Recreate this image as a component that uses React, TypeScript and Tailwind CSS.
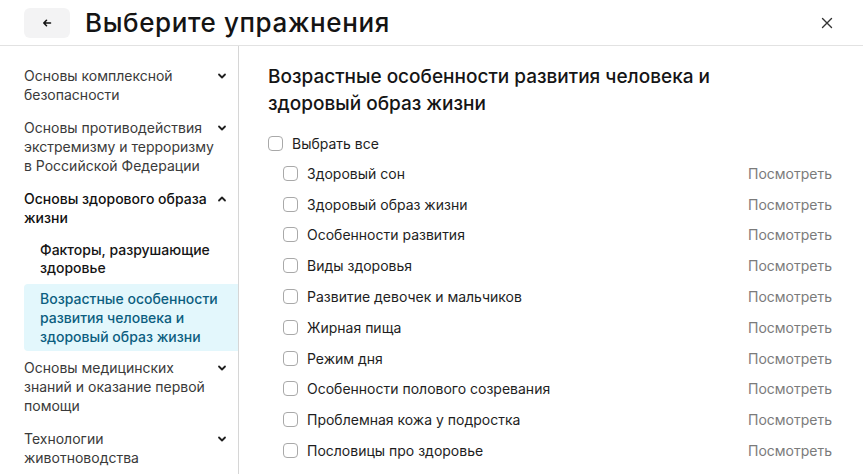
import React from "react";

type SubItem = { lines: string[]; active?: boolean };
type Section = { lines: string[]; open?: boolean; children?: SubItem[] };

// titles are split the way the sidebar wraps them
const SECTIONS: Section[] = [
  { lines: ["Основы комплексной", "безопасности"] },
  { lines: ["Основы противодействия", "экстремизму и терроризму", "в Российской Федерации"] },
  {
    lines: ["Основы здорового образа", "жизни"],
    open: true,
    children: [
      { lines: ["Факторы, разрушающие", "здоровье"] },
      { lines: ["Возрастные особенности", "развития человека и", "здоровый образ жизни"], active: true },
    ],
  },
  { lines: ["Основы медицинских", "знаний и оказание первой", "помощи"] },
  { lines: ["Технологии", "животноводства"] },
];

const EXERCISES = [
  "Здоровый сон",
  "Здоровый образ жизни",
  "Особенности развития",
  "Виды здоровья",
  "Развитие девочек и мальчиков",
  "Жирная пища",
  "Режим дня",
  "Особенности полового созревания",
  "Проблемная кожа у подростка",
  "Пословицы про здоровье",
];

function Lines({ lines }: { lines: string[] }) {
  return (
    <span className="whitespace-nowrap">
      {lines.map((l, i) => (
        <span key={i} className="block">
          {l}
        </span>
      ))}
    </span>
  );
}

function Chevron({ up }: { up?: boolean }) {
  return (
    <svg width="10" height="10" viewBox="0 0 10 10" className="mt-[5px] shrink-0">
      <path
        d={up ? "M2 6.5 L5 3.5 L8 6.5" : "M2 3.5 L5 6.5 L8 3.5"}
        fill="none"
        stroke="#1f1f1f"
        strokeWidth="1.8"
        strokeLinecap="round"
        strokeLinejoin="round"
      />
    </svg>
  );
}

function Checkbox() {
  return <span className="block h-[15px] w-[15px] shrink-0 rounded-[4px] border border-[#a9a9a9] bg-white" />;
}

export default function App() {
  return (
    <div
      className="flex h-[474px] w-[863px] flex-col overflow-hidden bg-white text-[#1e1e1e]"
      style={{ fontFamily: "Inter, 'Noto Sans', sans-serif" }}
    >
      {/* header */}
      <div className="flex h-[46px] shrink-0 items-center border-b border-[#e2e2e2] pl-6 pr-[26px]">
        <button className="flex h-[30px] w-[46px] items-center justify-center rounded-md bg-[#f3f3f4]">
          <svg width="10" height="10" viewBox="0 0 10 10">
            <path d="M8.5 5 H1.8 M4.5 2.3 L1.8 5 L4.5 7.7" fill="none" stroke="#111" strokeWidth="1.6" strokeLinecap="round" strokeLinejoin="round" />
          </svg>
        </button>
        <h1 className="ml-[15px] text-[26px] font-medium tracking-[0.6px] text-[#141414]">Выберите упражнения</h1>
        <button className="ml-auto flex h-5 w-5 items-center justify-center">
          <svg width="12" height="12" viewBox="0 0 12 12">
            <path d="M1.5 1.5 L10.5 10.5 M10.5 1.5 L1.5 10.5" stroke="#333" strokeWidth="1.4" strokeLinecap="round" />
          </svg>
        </button>
      </div>

      <div className="flex min-h-0 flex-1">
        {/* sidebar */}
        <aside className="w-[239px] shrink-0 border-r border-[#d6d6d6] pl-6 pt-[13px] text-[14px] leading-[19px]">
          {SECTIONS.map((s) => (
            <div key={s.lines[0]}>
              <div className={`flex items-start justify-between py-[7px] pr-[11px] ${s.open ? "font-medium text-[#111]" : "text-[#3a3a3a]"}`}>
                <Lines lines={s.lines} />
                <Chevron up={s.open} />
              </div>
              {s.children?.map((c) =>
                c.active ? (
                  <div key={c.lines[0]} className="rounded-l-[4px] bg-[#e3f7fc] py-[5px] pl-4 pr-3 font-medium text-[#0c5e80]">
                    <Lines lines={c.lines} />
                  </div>
                ) : (
                  <div key={c.lines[0]} className="py-[7px] pl-4 pr-3 font-medium leading-[18px] text-[#151515]">
                    <Lines lines={c.lines} />
                  </div>
                )
              )}
            </div>
          ))}
        </aside>

        {/* content */}
        <main className="flex-1 pl-[29px] pr-[31px] pt-[17px]">
          <h2 className="max-w-[520px] text-[19px] font-medium leading-[27px] text-[#151515]">
            Возрастные особенности развития человека и здоровый образ жизни
          </h2>
          <label className="mt-[11px] flex h-[30px] items-center gap-[9px] text-[14px] text-[#1e1e1e]">
            <Checkbox />
            <span>Выбрать все</span>
          </label>
          <ul>
            {EXERCISES.map((e) => (
              <li key={e} className="flex h-[30.8px] items-center pl-[15px] text-[14px]">
                <Checkbox />
                <span className="ml-[9px] text-[#1e1e1e]">{e}</span>
                <span className="ml-auto text-[#7b7b7b]">Посмотреть</span>
              </li>
            ))}
          </ul>
        </main>
      </div>
    </div>
  );
}
